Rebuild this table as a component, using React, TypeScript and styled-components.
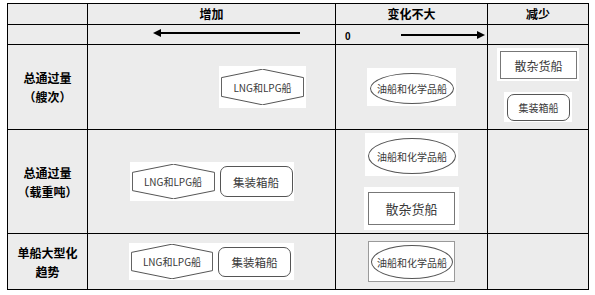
import React from 'react'
import styled, { createGlobalStyle } from 'styled-components'

const GlobalStyle = createGlobalStyle`
    body {
        margin: 0;
        background: #ffffff;
        font-family: 'Noto Sans CJK SC', 'Noto Sans', sans-serif;
    }
`

const Page = styled.div`
    padding: 3px 0 0 7px;
`

const Table = styled.table`
    width: 581px;
    table-layout: fixed;
    border-collapse: collapse;
    background: #ececec;
    color: #000;
`

const Row = styled.tr<{ $h: number }>`
    height: ${(p) => p.$h}px;
`

const Cell = styled.td`
    border: 1px solid #000;
    padding: 0;
    vertical-align: middle;
`

const HeadCell = styled(Cell)`
    text-align: center;
    font-size: 12px;
    font-weight: 700;
    line-height: 14px;
`

const LabelCell = styled(Cell)`
    text-align: center;
    font-size: 12px;
    font-weight: 700;
    line-height: 19px;
`

const Stack = styled.div<{ $justify?: string; $pad?: string; $dir?: string; $gap?: number }>`
    display: flex;
    flex-direction: ${(p) => p.$dir || 'row'};
    align-items: center;
    justify-content: ${(p) => p.$justify || 'center'};
    padding: ${(p) => p.$pad || '0'};
    gap: ${(p) => p.$gap || 0}px;
`

const ArrowRow = styled.div`
    display: flex;
    align-items: center;
    height: 19px;
    padding-left: 9px;
`

const Zero = styled.span`
    font-size: 10px;
    font-weight: 700;
    font-family: 'Liberation Sans', Arial, sans-serif;
    margin-top: 4px;
    width: 56px;
`

const Tile = styled.div<{ $pad: string; $outlined?: boolean }>`
    display: flex;
    align-items: center;
    gap: 5px;
    background: #ffffff;
    padding: ${(p) => p.$pad};
    border: ${(p) => (p.$outlined ? '1px solid #9a9a9a' : 'none')};
`

const ShapeText = styled.span<{ $size: number }>`
    font-size: ${(p) => p.$size}px;
    color: #3a3a3a;
    white-space: nowrap;
`

const Hexa = styled.div<{ $w: number; $h: number }>`
    display: grid;
    place-items: center;
    width: ${(p) => p.$w}px;
    height: ${(p) => p.$h}px;
    & > * {
        grid-area: 1 / 1;
    }
    svg {
        width: 100%;
        height: 100%;
    }
`

const Oval = styled.div<{ $w: number; $h: number }>`
    display: flex;
    align-items: center;
    justify-content: center;
    width: ${(p) => p.$w}px;
    height: ${(p) => p.$h}px;
    box-sizing: border-box;
    border: 1px solid #555;
    border-radius: 50%;
`

const Frame = styled.div<{ $w: number; $h: number; $round?: boolean }>`
    display: flex;
    align-items: center;
    justify-content: center;
    width: ${(p) => p.$w}px;
    height: ${(p) => p.$h}px;
    box-sizing: border-box;
    border: 1px solid ${(p) => (p.$round ? '#555' : '#777')};
    border-radius: ${(p) => (p.$round ? '7px' : '0')};
`

const Hexagon = ({ w, h }: { w: number; h: number }) => (
    <Hexa $w={w} $h={h}>
        <svg viewBox="0 0 100 100" preserveAspectRatio="none">
            <polygon
                points="0.5,24 50,0.5 99.5,24 99.5,76 50,99.5 0.5,76"
                fill="none"
                stroke="#555"
                strokeWidth="1"
                vectorEffect="non-scaling-stroke"
            />
        </svg>
        <ShapeText $size={10}>LNG和LPG船</ShapeText>
    </Hexa>
)

const Tanker = ({ w, h }: { w: number; h: number }) => (
    <Oval $w={w} $h={h}>
        <ShapeText $size={10}>油船和化学品船</ShapeText>
    </Oval>
)

const Arrow = ({ width, dir }: { width: number; dir: 'left' | 'right' }) => (
    <svg width={width} height="8" viewBox={`0 0 ${width} 8`}>
        {dir === 'left' ? (
            <>
                <line x1="6" y1="4" x2={width} y2="4" stroke="#000" strokeWidth="2" />
                <polygon points="0,4 8,0 8,8" fill="#000" />
            </>
        ) : (
            <>
                <line x1="0" y1="4" x2={width - 6} y2="4" stroke="#000" strokeWidth="2" />
                <polygon points={`${width},4 ${width - 8},0 ${width - 8},8`} fill="#000" />
            </>
        )}
    </svg>
)

const App = () => {
    return (
        <Page>
            <GlobalStyle />
            <Table>
                <colgroup>
                    <col style={{ width: 80 }} />
                    <col style={{ width: 248 }} />
                    <col style={{ width: 152 }} />
                    <col style={{ width: 101 }} />
                </colgroup>
                <tbody>
                    <Row $h={21}>
                        <HeadCell />
                        <HeadCell>增加</HeadCell>
                        <HeadCell>变化不大</HeadCell>
                        <HeadCell>减少</HeadCell>
                    </Row>
                    <Row $h={20}>
                        <Cell />
                        <Cell>
                            <Stack $justify="flex-start" $pad="0 0 3px 65px">
                                <Arrow width={147} dir="left" />
                            </Stack>
                        </Cell>
                        <Cell>
                            <ArrowRow>
                                <Zero>0</Zero>
                                <Arrow width={84} dir="right" />
                            </ArrowRow>
                        </Cell>
                        <Cell />
                    </Row>
                    <Row $h={85}>
                        <LabelCell>
                            总通过量
                            <br />
                            （艘次）
                        </LabelCell>
                        <Cell>
                            <Stack $justify="flex-end" $pad="0 29px 0 0">
                                <Tile $pad="3px 2px 3px 2px">
                                    <Hexagon w={83} h={36} />
                                </Tile>
                            </Stack>
                        </Cell>
                        <Cell>
                            <Stack>
                                <Tile $pad="5px 2px 2px 3px">
                                    <Tanker w={84} h={31} />
                                </Tile>
                            </Stack>
                        </Cell>
                        <Cell>
                            <Stack $dir="column" $gap={11} $pad="0 0 4px 0">
                                <Tile $pad="3px 2px 2px 3px">
                                    <Frame $w={77} $h={28}>
                                        <ShapeText $size={12}>散杂货船</ShapeText>
                                    </Frame>
                                </Tile>
                                <Tile $pad="2px 2px 1px 3px">
                                    <Frame $w={63} $h={27} $round>
                                        <ShapeText $size={10}>集装箱船</ShapeText>
                                    </Frame>
                                </Tile>
                            </Stack>
                        </Cell>
                    </Row>
                    <Row $h={104}>
                        <LabelCell>
                            总通过量
                            <br />
                            （载重吨）
                        </LabelCell>
                        <Cell>
                            <Stack>
                                <Tile $pad="2px 1px 2px 2px">
                                    <Hexagon w={83} h={35} />
                                    <Frame $w={73} $h={31} $round>
                                        <ShapeText $size={11.5}>集装箱船</ShapeText>
                                    </Frame>
                                </Tile>
                            </Stack>
                        </Cell>
                        <Cell>
                            <Stack $dir="column" $gap={11}>
                                <Tile $pad="5px 2px 2px 3px">
                                    <Tanker w={88} h={36} />
                                </Tile>
                                <Tile $pad="5px 4px 5px 4px">
                                    <Frame $w={87} $h={33}>
                                        <ShapeText $size={13}>散杂货船</ShapeText>
                                    </Frame>
                                </Tile>
                            </Stack>
                        </Cell>
                        <Cell />
                    </Row>
                    <Row $h={56}>
                        <LabelCell>
                            单船大型化
                            <br />
                            趋势
                        </LabelCell>
                        <Cell>
                            <Stack>
                                <Tile $pad="1px 3px 1px 2px">
                                    <Hexagon w={82} h={35} />
                                    <Frame $w={73} $h={30} $round>
                                        <ShapeText $size={11.5}>集装箱船</ShapeText>
                                    </Frame>
                                </Tile>
                            </Stack>
                        </Cell>
                        <Cell>
                            <Stack>
                                <Tile $pad="3px 1px 2px 2px" $outlined>
                                    <Tanker w={82} h={34} />
                                </Tile>
                            </Stack>
                        </Cell>
                        <Cell />
                    </Row>
                </tbody>
            </Table>
        </Page>
    )
}

export default App
